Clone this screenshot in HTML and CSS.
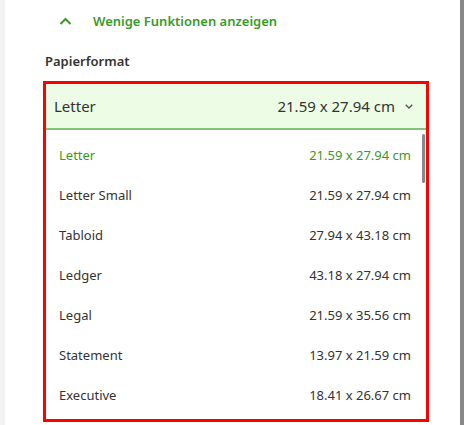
FILE: index.html
```html
<!DOCTYPE html>
<html lang="de">
<head>
    <meta charset="UTF-8">
    <title>Papierformat</title>
    <link rel="stylesheet" href="styles.css">
</head>
<body>
    <div class="edge"></div>
    <div class="panel">
        <div class="toggle">
            <svg class="toggle-icon" width="13" height="8" viewBox="0 0 13 8">
                <path d="M1.5 7 L6.5 2 L11.5 7" fill="none" stroke="#3a9a28" stroke-width="2"/>
            </svg>
            <span>Wenige Funktionen anzeigen</span>
        </div>
        <div class="label">Papierformat</div>
        <div class="highlight">
            <div class="select">
                <span>Letter</span>
                <span class="select-value">21.59 x 27.94 cm
                    <svg class="caret" width="8" height="5" viewBox="0 0 8 5">
                        <path d="M0.7 0.7 L4 4 L7.3 0.7" fill="none" stroke="#555" stroke-width="1.3"/>
                    </svg>
                </span>
            </div>
            <div class="options">
                <div class="option selected"><span>Letter</span><span>21.59 x 27.94 cm</span></div>
                <div class="option"><span>Letter Small</span><span>21.59 x 27.94 cm</span></div>
                <div class="option"><span>Tabloid</span><span>27.94 x 43.18 cm</span></div>
                <div class="option"><span>Ledger</span><span>43.18 x 27.94 cm</span></div>
                <div class="option"><span>Legal</span><span>21.59 x 35.56 cm</span></div>
                <div class="option"><span>Statement</span><span>13.97 x 21.59 cm</span></div>
                <div class="option"><span>Executive</span><span>18.41 x 26.67 cm</span></div>
                <div class="thumb"></div>
            </div>
        </div>
        <p class="note">Passt zur Simulation beim Drucken als PDF-Modell</p>
    </div>
    <div class="scrollbar"></div>
</body>
</html>
```

FILE: styles.css
```css
html, body {
    height: 100%;
}
body {
    margin: 0;
    display: flex;
    overflow: hidden;
    background: #fff;
    font-family: "Noto Sans", "Open Sans", sans-serif;
    color: #333;
}
.edge {
    width: 5px;
    background: #f3f3f3;
}
.panel {
    flex: 1;
    padding-left: 40px;
}
.scrollbar {
    width: 4px;
    margin-right: 5px;
    background: #888;
}
.toggle {
    display: flex;
    align-items: center;
    height: 42px;
    padding-left: 14px;
    color: #3a9a28;
    font-size: 13px;
    font-weight: 600;
}
.toggle-icon {
    margin-right: 21px;
}
.label {
    font-size: 13px;
    font-weight: 600;
    line-height: 18px;
    margin-top: 10px;
    margin-bottom: 11px;
}
.highlight {
    position: relative;
    width: 380px;
    margin-left: -2px;
    border: 3px solid #ff0000;
}
.select {
    display: flex;
    align-items: center;
    justify-content: space-between;
    height: 44px;
    padding: 0 13px 0 8px;
    background: #ecfce5;
    border-bottom: 2px solid #84c47a;
    font-size: 15px;
}
.select-value {
    display: flex;
    align-items: center;
}
.caret {
    margin-left: 10px;
}
.options {
    padding: 5px 0 4px;
    font-size: 13px;
}
.option {
    display: flex;
    justify-content: space-between;
    align-items: center;
    height: 40px;
    padding: 0 15px 0 13px;
}
.option.selected {
    color: #3a9a28;
}
.thumb {
    position: absolute;
    top: 50px;
    right: 1px;
    width: 3px;
    height: 49px;
    border-radius: 2px;
    background: #888;
}
.note {
    margin: 0;
    padding-left: 31px;
    font-size: 13px;
}
```
